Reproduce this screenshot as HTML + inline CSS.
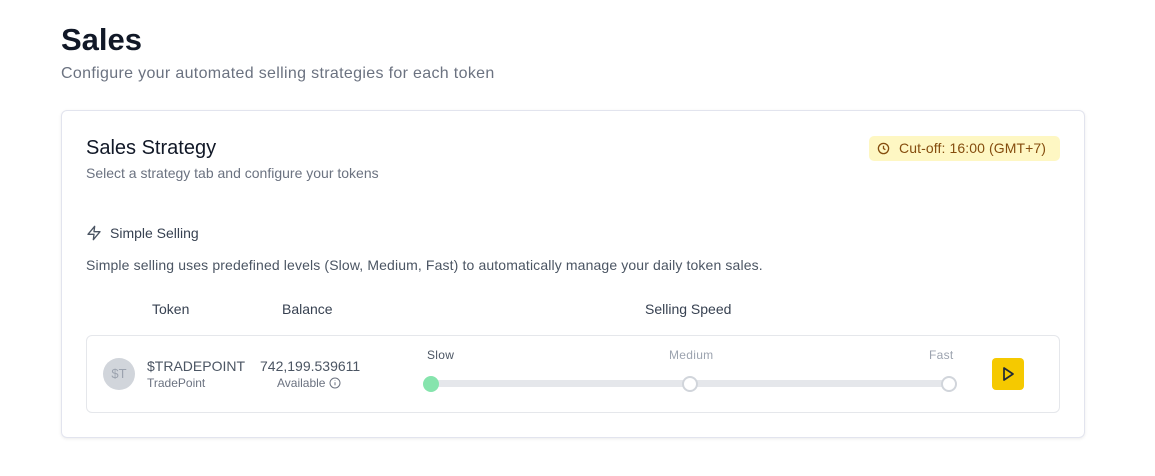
<!DOCTYPE html>
<html><head><style>
*{margin:0;padding:0;box-sizing:border-box}
body{width:1155px;height:476px;background:#fff;font-family:"Liberation Sans",sans-serif;position:relative;overflow:hidden;color:#111827}
.a{position:absolute;white-space:nowrap}
</style></head><body>
<div class="a" style="left:61px;top:22px;font-size:31px;font-weight:bold;color:#111827">Sales</div>
<div class="a" style="left:61px;top:65px;font-size:16px;color:#6b7280;letter-spacing:0.33px">Configure your automated selling strategies for each token</div>
<div class="a" style="left:61px;top:110px;width:1024px;height:328px;border:1px solid #e2e4ee;border-radius:6px;box-shadow:0 1px 3px rgba(0,0,0,0.08)"></div>
<div class="a" style="left:86px;top:137px;font-size:20px;color:#111827">Sales Strategy</div>
<div class="a" style="left:86px;top:165px;font-size:14px;color:#6b7280">Select a strategy tab and configure your tokens</div>
<div class="a" style="left:869px;top:136px;width:191px;height:25px;background:#fef7c3;border-radius:5px;font-size:14px;color:#854d0e;line-height:25px;padding-left:30px;letter-spacing:0.1px">Cut-off: 16:00 (GMT+7)</div>
<svg class="a" style="left:877px;top:142px" width="13" height="13" viewBox="0 0 14 14" fill="none" stroke="#854d0e" stroke-width="1.4"><circle cx="7" cy="7" r="5.5"/><path d="M7 4v3l2 1.3"/></svg>
<svg class="a" style="left:86px;top:225px" width="16" height="16" viewBox="0 0 24 24" fill="none" stroke="#4b5563" stroke-width="2" stroke-linejoin="round"><path d="M13 2L3 14h9l-1 8 10-12h-9l1-8z"/></svg>
<div class="a" style="left:110px;top:225px;font-size:14px;color:#374151">Simple Selling</div>
<div class="a" style="left:86px;top:257px;font-size:14px;color:#4b5563;letter-spacing:0.13px">Simple selling uses predefined levels (Slow, Medium, Fast) to automatically manage your daily token sales.</div>
<div class="a" style="left:152px;top:301px;font-size:14px;color:#374151">Token</div>
<div class="a" style="left:282px;top:301px;font-size:14px;color:#374151">Balance</div>
<div class="a" style="left:645px;top:301px;font-size:14px;color:#374151">Selling Speed</div>
<div class="a" style="left:86px;top:335px;width:974px;height:78px;border:1px solid #e5e7eb;border-radius:6px"></div>
<div class="a" style="left:103px;top:358px;width:32px;height:32px;border-radius:50%;background:#d1d5db;color:#9ca3af;font-size:13px;line-height:32px;text-align:center">$T</div>
<div class="a" style="left:147px;top:358px;font-size:14px;color:#4b5563">$TRADEPOINT</div>
<div class="a" style="left:147px;top:376px;font-size:12px;color:#6b7280">TradePoint</div>
<div class="a" style="left:260px;top:358px;font-size:14px;color:#4b5563">742,199.539611</div>
<div class="a" style="left:277px;top:376px;font-size:12px;color:#6b7280">Available</div>
<svg class="a" style="left:329px;top:377px" width="12" height="12" viewBox="0 0 12 12" fill="none" stroke="#6b7280" stroke-width="1"><circle cx="6" cy="6" r="5"/><path d="M6 5.3v3M6 3.5v.5"/></svg>
<div class="a" style="left:427px;top:348px;font-size:12px;color:#4b5563;letter-spacing:0.3px">Slow</div>
<div class="a" style="left:669px;top:348px;font-size:12px;color:#9ca3af;letter-spacing:0.3px">Medium</div>
<div class="a" style="left:929px;top:348px;font-size:12px;color:#9ca3af;letter-spacing:0.3px">Fast</div>
<div class="a" style="left:431px;top:380px;width:518px;height:7px;background:#e5e7eb;border-radius:4px"></div>
<div class="a" style="left:423px;top:376px;width:16px;height:16px;border-radius:50%;background:#86e4ad"></div>
<div class="a" style="left:682px;top:376px;width:16px;height:16px;border-radius:50%;background:#fff;border:2px solid #d1d5db"></div>
<div class="a" style="left:941px;top:376px;width:16px;height:16px;border-radius:50%;background:#fff;border:2px solid #d1d5db"></div>
<div class="a" style="left:992px;top:358px;width:32px;height:32px;border-radius:4px;background:#f5c900"></div>
<svg class="a" style="left:1000px;top:365px" width="16" height="18" viewBox="0 0 16 18" fill="none" stroke="#1f2937" stroke-width="1.7" stroke-linejoin="round"><path d="M4 3l9 6-9 6z"/></svg>
</body></html>
